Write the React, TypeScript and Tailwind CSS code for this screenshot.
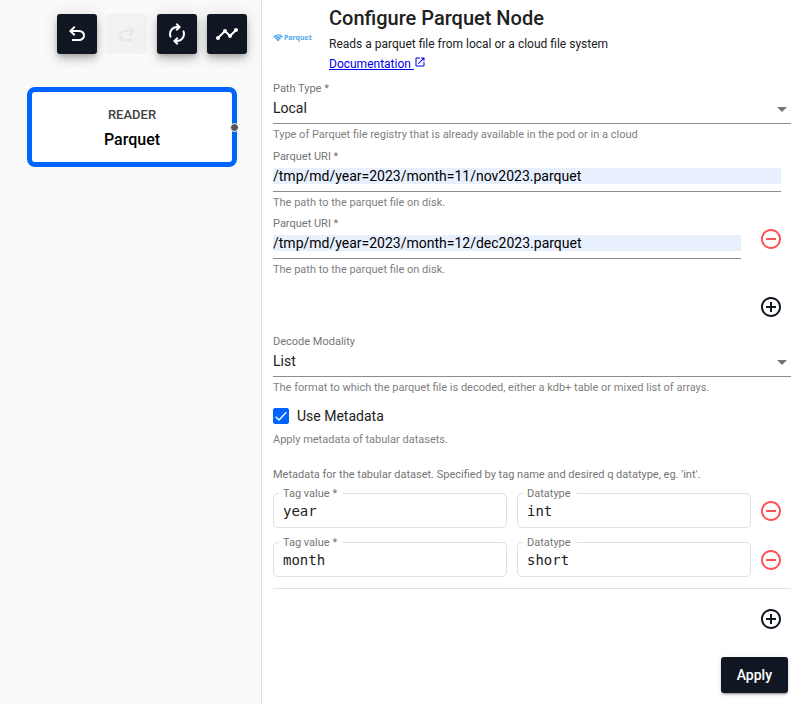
import { useState, type ReactNode } from "react";
import {
  MdAddCircleOutline,
  MdOpenInNew,
  MdRemoveCircleOutline,
  MdTimeline,
} from "react-icons/md";

const UNDO =
  "M280-200v-80h284q63 0 109.5-40T720-420q0-60-46.5-100T564-560H312l104 104-56 56-200-200 200-200 56 56-104 104h252q97 0 169.5 63T800-420q0 94-72.5 157T564-200H280Z";
const REDO =
  "M396-200q-97 0-169.5-63T154-420q0-94 72.5-157T396-640h252L544-744l56-56 200 200-200 200-56-56 104-104H396q-63 0-109.5 40T240-420q0 60 46.5 100T396-280h284v80H396Z";
const RENEW =
  "M204-318q-22-38-33-78t-11-82q0-134 93-228t227-94h7l-64-64 56-56 160 160-160 160-56-56 64-64h-7q-100 0-170 70.5T240-478q0 26 6 51t18 49l-60 60ZM481-40 321-200l160-160 56 56-64 64h7q100 0 170-70.5T720-482q0-26-6-51t-18-49l60-60q22 38 33 78t11 82q0 134-93 228t-227 94h-7l64 64-56 56Z";

function SymbolIcon({ d }: { d: string }) {
  return (
    <svg viewBox="0 -960 960 960" className="size-6 fill-current" aria-hidden="true">
      <path d={d} />
    </svg>
  );
}

function ToolButton({
  label,
  disabled,
  children,
}: {
  label: string;
  disabled?: boolean;
  children: ReactNode;
}) {
  return (
    <button
      type="button"
      aria-label={label}
      disabled={disabled}
      className="flex size-10 items-center justify-center rounded-[3px] bg-[#111722] text-white shadow-[0_3px_5px_-1px_rgba(0,0,0,0.2),0_6px_10px_0_rgba(0,0,0,0.14),0_1px_18px_0_rgba(0,0,0,0.12)] disabled:bg-[#f2f2f2] disabled:text-[#e6e6e6] disabled:shadow-none"
    >
      {children}
    </button>
  );
}

function SelectField({
  id,
  label,
  help,
  options,
}: {
  id: string;
  label: string;
  help: string;
  options: string[];
}) {
  return (
    <div>
      <label htmlFor={id} className="block h-4 text-[11px] leading-[18px] text-[#757575]">
        {label}
      </label>
      <div className="relative h-7 border-b border-[#8c8c8c]">
        <select
          id={id}
          className="block h-6 w-full appearance-none bg-transparent text-sm leading-6 text-[#212121] outline-none"
        >
          {options.map((o) => (
            <option key={o}>{o}</option>
          ))}
        </select>
        <svg
          viewBox="0 0 10 5"
          className="pointer-events-none absolute top-[11px] right-1 h-[5px] w-[10px] fill-[#757575]"
          aria-hidden="true"
        >
          <path d="M0 0h10L5 5z" />
        </svg>
      </div>
      <p className="h-6 text-[11px] leading-[22px] text-[#808080]">{help}</p>
    </div>
  );
}

function UriField({ id, value }: { id: string; value: string }) {
  return (
    <div className="min-w-0 flex-1">
      <label htmlFor={id} className="block h-4 text-[11px] leading-[18px] text-[#757575]">
        Parquet URI *
      </label>
      <div className="h-7 border-b border-[#8c8c8c] pt-1">
        <input
          id={id}
          defaultValue={value}
          className="block h-4 w-full bg-[#e8f0fe] text-sm leading-4 text-black outline-none"
        />
      </div>
      <p className="h-[23px] text-[11px] leading-[22px] text-[#808080]">
        The path to the parquet file on disk.
      </p>
    </div>
  );
}

function OutlinedField({ id, label, value }: { id: string; label: string; value: string }) {
  return (
    <div className="relative min-w-0 flex-1">
      <input
        id={id}
        defaultValue={value}
        className="block h-[35px] w-full rounded-[5px] border border-[#e0e0e0] px-[9px] font-['DejaVu_Sans_Mono',monospace] text-sm text-[#212121] outline-none"
      />
      <label
        htmlFor={id}
        className="absolute -top-2 left-[6px] bg-white pr-[6px] pl-1 text-[11px] leading-[18px] text-[#757575]"
      >
        {label}
      </label>
    </div>
  );
}

function RoundButton({ kind, label }: { kind: "add" | "remove"; label: string }) {
  return (
    <button type="button" aria-label={label} className="block size-6 shrink-0">
      {kind === "add" ? (
        <MdAddCircleOutline className="size-6 text-[#111722]" />
      ) : (
        <MdRemoveCircleOutline className="size-6 text-[#ff5257]" />
      )}
    </button>
  );
}

export default function App() {
  const [useMetadata, setUseMetadata] = useState(true);

  return (
    <div className="flex min-h-screen bg-white font-['Roboto',sans-serif]">
      <aside className="w-[262px] shrink-0 border-r border-[#e0e0e0] bg-[#fafafa]">
        <div className="flex justify-end gap-2.5 p-3.5">
          <ToolButton label="Undo">
            <SymbolIcon d={UNDO} />
          </ToolButton>
          <ToolButton label="Redo" disabled>
            <SymbolIcon d={REDO} />
          </ToolButton>
          <ToolButton label="Reset">
            <SymbolIcon d={RENEW} />
          </ToolButton>
          <ToolButton label="Chart">
            <MdTimeline className="size-6" />
          </ToolButton>
        </div>
        <div className="relative mt-[19px] mr-6 ml-[27px] flex h-20 flex-col items-center rounded-lg border-5 border-[#0065ff] bg-white pt-[11px]">
          <div className="text-[13px] leading-6 font-medium text-[#424242]">READER</div>
          <div className="text-base leading-[26px] font-medium text-black">Parquet</div>
          <span className="absolute top-[31px] -right-[7px] size-[9px] rounded-full border border-white bg-[#555555]" />
        </div>
      </aside>

      <main className="min-w-0 flex-1 pr-[19px] pb-[11px] pl-[11px]">
        <header className="flex gap-4 pt-1.5">
          <div className="flex h-16 w-10 shrink-0 items-center text-[#52a8ec]">
            <svg viewBox="0 0 20 16" className="h-2 w-[10px] shrink-0 fill-current" aria-hidden="true">
              <path d="M0 5 7 1l3 2-7 5zM8 0h5l-2 2.500zM14 1l6 4-3 3-6-4.500zM4 9l6-5 6 5-2 2-4-3-4 3zM6.500 11.500 10 9l3.500 2.500L10 15z" />
            </svg>
            <span className="ml-px font-['Noto_Sans',sans-serif] text-[7px] leading-3 font-bold">
              Parquet
            </span>
          </div>
          <div>
            <h1 className="text-xl leading-6 font-medium text-[#212121]">Configure Parquet Node</h1>
            <p className="mt-1 text-xs leading-5 text-[#212121]">
              Reads a parquet file from local or a cloud file system
            </p>
            <a
              href="#documentation"
              className="flex h-5 items-start text-xs leading-5 text-[#0000ee]"
            >
              <span className="whitespace-pre underline">Documentation </span>
              <MdOpenInNew className="mt-0.5 size-3" />
            </a>
          </div>
        </header>

        <form className="pt-1.5" onSubmit={(e) => e.preventDefault()}>
          <SelectField
            id="path-type"
            label="Path Type *"
            help="Type of Parquet file registry that is already available in the pod or in a cloud"
            options={["Local", "Cloud"]}
          />
          <div className="flex pr-[10px]">
            <UriField id="uri-1" value="/tmp/md/year=2023/month=11/nov2023.parquet" />
          </div>
          <div className="flex gap-[18px] pr-2">
            <UriField id="uri-2" value="/tmp/md/year=2023/month=12/dec2023.parquet" />
            <div className="pt-3">
              <RoundButton kind="remove" label="Remove URI" />
            </div>
          </div>
          <div className="flex justify-end pt-[13px] pr-2 pb-3.5">
            <RoundButton kind="add" label="Add URI" />
          </div>
          <SelectField
            id="decode-modality"
            label="Decode Modality"
            help="The format to which the parquet file is decoded, either a kdb+ table or mixed list of arrays."
            options={["List", "Table"]}
          />

          <label className="mt-[3px] flex h-6 items-center gap-2 text-sm text-[#212121]">
            <span className="relative block size-4">
              <input
                type="checkbox"
                checked={useMetadata}
                onChange={(e) => setUseMetadata(e.target.checked)}
                className="peer block size-4 appearance-none rounded-[2px] border border-[#757575] bg-white checked:border-[#0065ff] checked:bg-[#0065ff]"
              />
              <svg
                viewBox="0 0 24 24"
                className="pointer-events-none absolute inset-0 hidden size-4 fill-none stroke-white stroke-2 peer-checked:block"
                aria-hidden="true"
              >
                <path d="M4 13l5 5L20 6.500" />
              </svg>
            </span>
            Use Metadata
          </label>
          <p className="mt-1 text-[11px] leading-4 text-[#808080]">
            Apply metadata of tabular datasets.
          </p>

          <p className="mt-[19px] text-[11px] leading-4 text-[#757575]">
            Metadata for the tabular dataset. Specified by tag name and desired q datatype, eg. 'int'.
          </p>
          <div className="mt-2.5 flex flex-col gap-3.5 border-b border-[#e0e0e0] pr-2 pb-[11px]">
            <div className="flex items-center gap-2">
              <div className="flex min-w-0 flex-1 gap-[10px]">
                <OutlinedField id="tag-1" label="Tag value *" value="year" />
                <OutlinedField id="type-1" label="Datatype" value="int" />
              </div>
              <RoundButton kind="remove" label="Remove year" />
            </div>
            <div className="flex items-center gap-2">
              <div className="flex min-w-0 flex-1 gap-[10px]">
                <OutlinedField id="tag-2" label="Tag value *" value="month" />
                <OutlinedField id="type-2" label="Datatype" value="short" />
              </div>
              <RoundButton kind="remove" label="Remove month" />
            </div>
          </div>
          <div className="flex justify-end pt-[18px] pr-2">
            <RoundButton kind="add" label="Add tag" />
          </div>
          <div className="flex justify-end pt-[26px] pr-[3px]">
            <button
              type="submit"
              className="h-9 rounded-[3px] bg-[#111722] px-4 text-sm font-medium text-white shadow-[0_3px_1px_-2px_rgba(0,0,0,0.2),0_2px_2px_0_rgba(0,0,0,0.14),0_1px_5px_0_rgba(0,0,0,0.12)]"
            >
              Apply
            </button>
          </div>
        </form>
      </main>
    </div>
  );
}
